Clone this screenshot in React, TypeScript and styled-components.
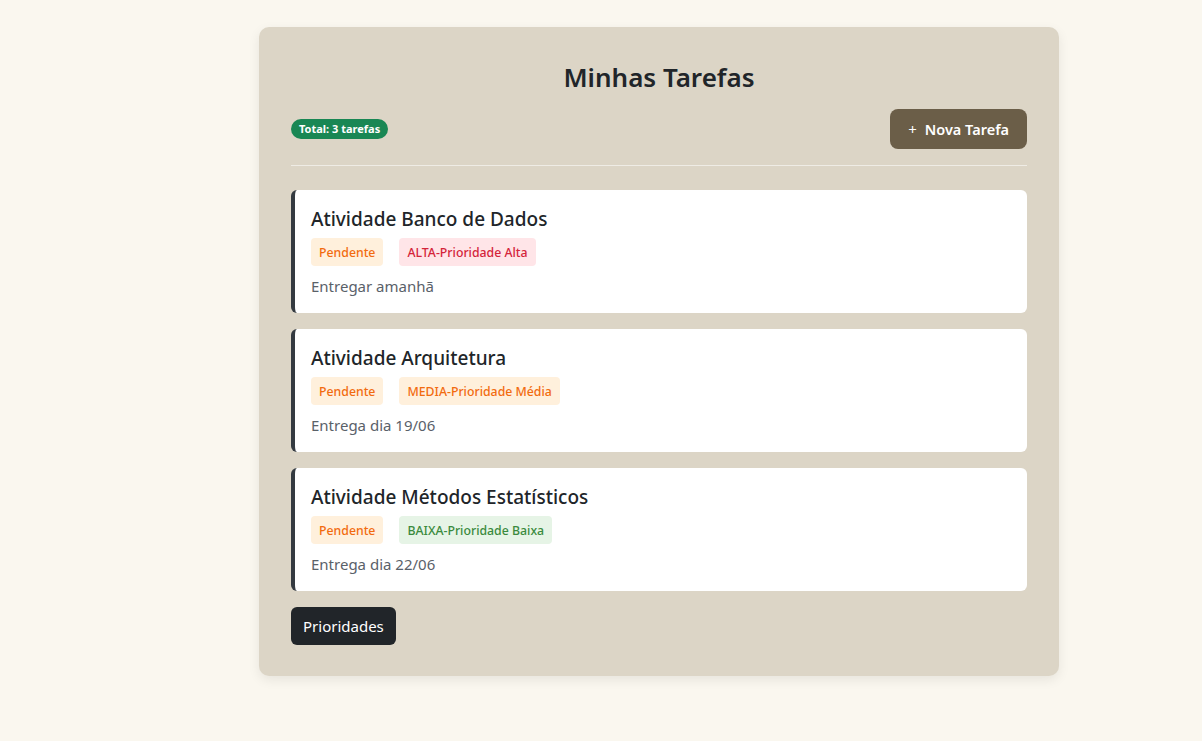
import React from "react";
import styled, { createGlobalStyle } from "styled-components";

const Global = createGlobalStyle`
  html, body { margin: 0; padding: 0; background: #faf7ef; }
  body { font-family: "Segoe UI", "Noto Sans", "Open Sans", sans-serif; color: #212529; }
  * { box-sizing: border-box; }
`;

const Page = styled.div`
  display: flex;
  justify-content: flex-start;
  padding: 27px 0 64px 259px;
`;

const Panel = styled.div`
  width: 800px;
  background: #dcd5c6;
  border-radius: 10px;
  box-shadow: 0 4px 12px rgba(0, 0, 0, 0.08);
  padding: 30px 32px 31px;
  display: flex;
  flex-direction: column;
`;

const Title = styled.h1`
  margin: 0 0 12px;
  text-align: center;
  font-size: 26px;
  font-weight: 600;
  line-height: 40px;
  color: #212529;
`;

const Toolbar = styled.div`
  display: flex;
  align-items: center;
  justify-content: space-between;
  padding-bottom: 16px;
  border-bottom: 1px solid rgba(255, 255, 255, 0.55);
  margin-bottom: 24px;
`;

const CountBadge = styled.span`
  background: #198754;
  color: #fff;
  font-size: 11px;
  font-weight: 700;
  border-radius: 10px;
  padding: 3px 8px;
  line-height: 14px;
`;

const NewButton = styled.button`
  display: flex;
  align-items: center;
  gap: 8px;
  background: #6b5e48;
  color: #fff;
  border: none;
  border-radius: 8px;
  height: 40px;
  padding: 0 18px;
  font-family: inherit;
  font-size: 14.5px;
  font-weight: 600;
  cursor: pointer;
`;

const Plus = styled.span`
  font-weight: 400;
  font-size: 15px;
`;

const List = styled.div`
  display: flex;
  flex-direction: column;
  gap: 16px;
`;

const TaskCard = styled.div`
  background: #fff;
  border-left: 4px solid #343a40;
  border-radius: 6px;
  padding: 16px 16px 15px 16px;
  display: flex;
  flex-direction: column;
`;

const TaskTitle = styled.h3`
  margin: 0 0 6px;
  font-size: 19px;
  font-weight: 500;
  line-height: 26px;
  color: #212529;
`;

const Tags = styled.div`
  display: flex;
  gap: 16px;
  margin-bottom: 8px;
`;

const Tag = styled.span<{ $bg: string; $fg: string }>`
  background: ${(p) => p.$bg};
  color: ${(p) => p.$fg};
  font-size: 12.3px;
  font-weight: 500;
  border-radius: 4px;
  padding: 0 8px;
  height: 28px;
  display: inline-flex;
  align-items: center;
`;

const Desc = styled.p`
  margin: 0;
  font-size: 15px;
  line-height: 24px;
  color: #5a6169;
`;

const Footer = styled.div`
  margin-top: 16px;
  display: flex;
`;

const DarkButton = styled.button`
  background: #212529;
  color: #fff;
  border: none;
  border-radius: 6px;
  height: 38px;
  padding: 0 12px;
  font-family: inherit;
  font-size: 15px;
  cursor: pointer;
`;

const pend = { bg: "#fff0dc", fg: "#f26b0f" };
const prio: Record<string, { bg: string; fg: string }> = {
  ALTA: { bg: "#ffe5e8", fg: "#d4243a" },
  MEDIA: { bg: "#fff0dc", fg: "#f26b0f" },
  BAIXA: { bg: "#e6f4e6", fg: "#3a8a3d" },
};

const tasks = [
  { title: "Atividade Banco de Dados", p: "ALTA", label: "ALTA-Prioridade Alta", desc: "Entregar amanhã" },
  { title: "Atividade Arquitetura", p: "MEDIA", label: "MEDIA-Prioridade Média", desc: "Entrega dia 19/06" },
  { title: "Atividade Métodos Estatísticos", p: "BAIXA", label: "BAIXA-Prioridade Baixa", desc: "Entrega dia 22/06" },
];

export default function App() {
  return (
    <>
      <Global />
      <Page>
        <Panel>
          <Title>Minhas Tarefas</Title>
          <Toolbar>
            <CountBadge>Total: 3 tarefas</CountBadge>
            <NewButton>
              <Plus>+</Plus>
              Nova Tarefa
            </NewButton>
          </Toolbar>
          <List>
            {tasks.map((t) => (
              <TaskCard key={t.title}>
                <TaskTitle>{t.title}</TaskTitle>
                <Tags>
                  <Tag $bg={pend.bg} $fg={pend.fg}>Pendente</Tag>
                  <Tag $bg={prio[t.p].bg} $fg={prio[t.p].fg}>{t.label}</Tag>
                </Tags>
                <Desc>{t.desc}</Desc>
              </TaskCard>
            ))}
          </List>
          <Footer>
            <DarkButton>Prioridades</DarkButton>
          </Footer>
        </Panel>
      </Page>
    </>
  );
}
